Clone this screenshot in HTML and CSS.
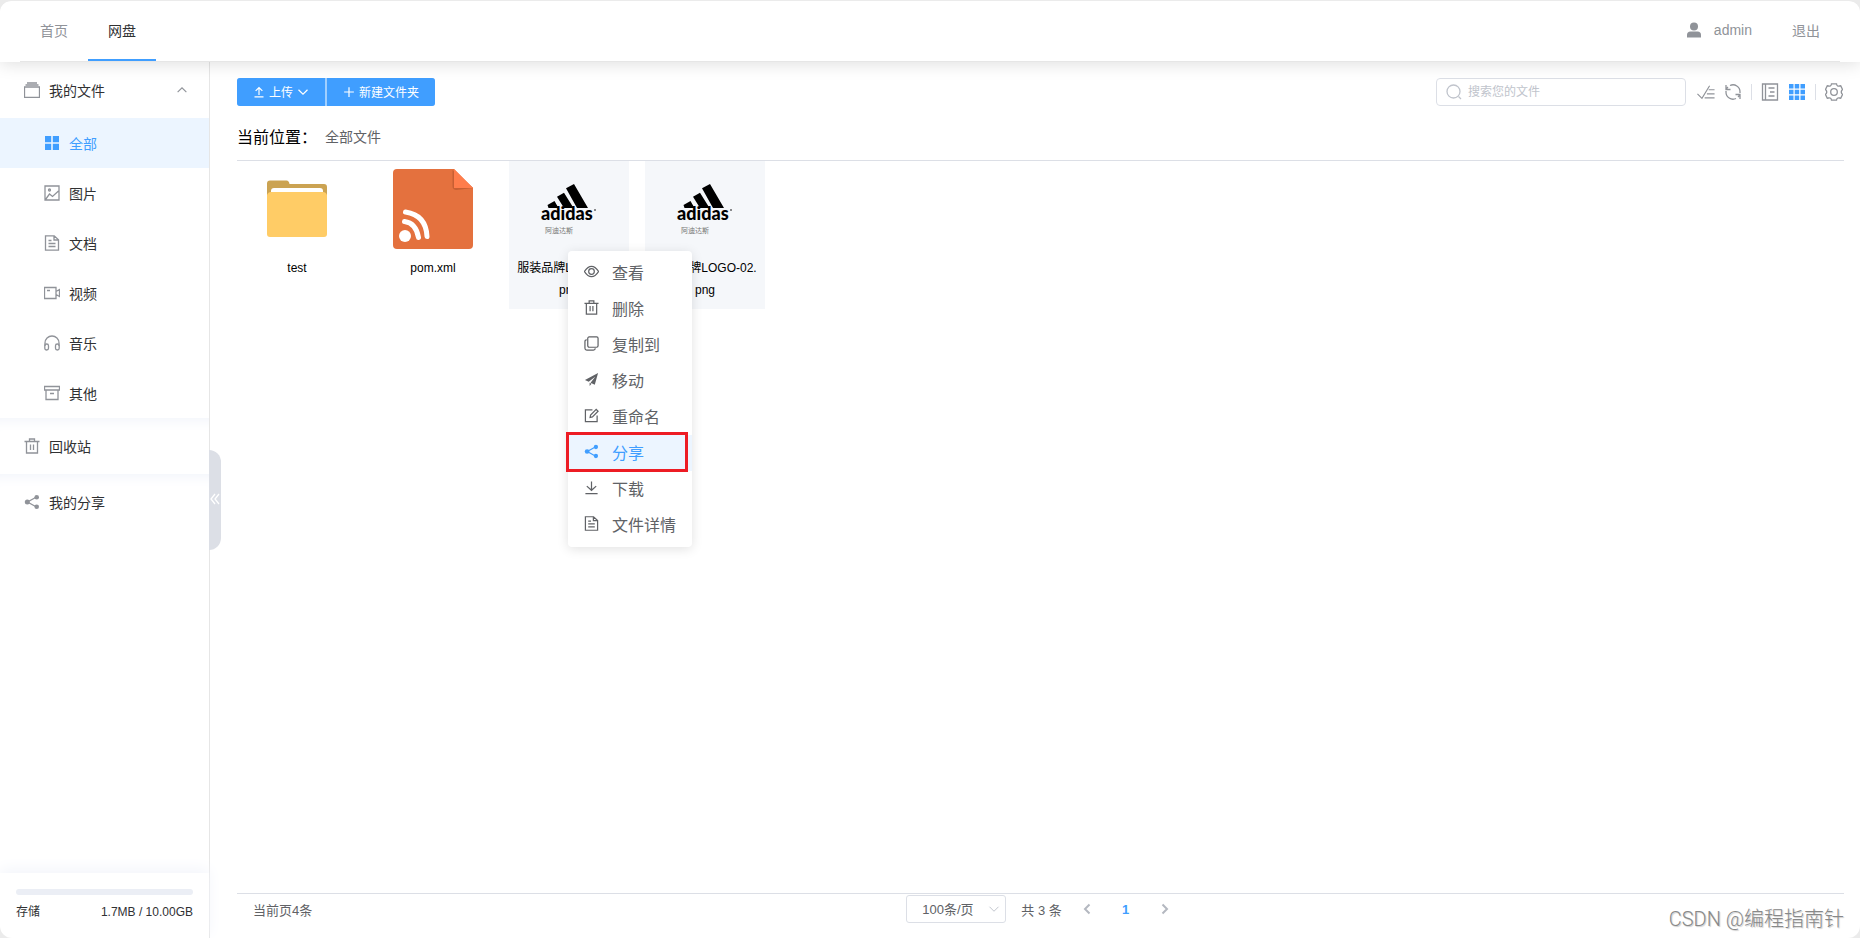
FILE: index.html
```
<!DOCTYPE html>
<html lang="zh-CN">
<head>
    <meta charset="UTF-8">
    <meta name="viewport" content="width=device-width, initial-scale=1.0">
    <title>网盘</title>
    <link rel="stylesheet" href="styles.css">
</head>
<body>
    <!-- 公用图标 -->
    <svg class="sprite" aria-hidden="true">
        <symbol id="i-trash" viewBox="0 0 16 16"><path d="M.5 3.500h15M5.500 3.500v-2.500h5v2.500M2.500 3.500v11.500h11V3.500M6.500 6.500v5.500M9.500 6.500v5.500"/></symbol>
        <symbol id="i-doc" viewBox="0 0 16 16"><path d="M1.500.8h8.700l4.300 4v10.400h-13zM10 1v4h4.500M4.500 5.500h3M4.500 8.500h7M4.500 11.500h7"/></symbol>
        <symbol id="i-share" viewBox="0 0 16 16"><path d="M12.500 3 3.500 8l9 5"/><g fill="currentColor" stroke="none"><circle cx="12.700" cy="3.200" r="2.300"/><circle cx="3.300" cy="8" r="2.500"/><circle cx="12.700" cy="12.800" r="2.300"/></g></symbol>
        <symbol id="i-down" viewBox="0 0 16 16"><path d="m2 5 6 6 6-6"/></symbol>
    </svg>

    <div class="app">
        <header class="header">
            <div class="header-inner">
                <nav class="nav">
                    <a href="#" class="nav-item">首页</a>
                    <a href="#" class="nav-item active">网盘</a>
                </nav>
                <div class="user">
                    <a href="#" class="nav-item user-name">
                        <svg class="icon" viewBox="0 0 16 16"><g fill="currentColor" stroke="none"><circle cx="8" cy="4.500" r="4"/><path d="M1 15.500v-2.500q0-3.500 3.500-3.500h7q3.500 0 3.500 3.500v2.500z"/></g></svg>
                        admin
                    </a>
                    <a href="#" class="nav-item">退出</a>
                </div>
            </div>
        </header>

        <div class="body">
            <aside class="sidebar">
                <nav class="menu">
                    <button class="menu-title">
                        <svg class="icon" viewBox="0 0 16 16"><path d="M.5 5h15v10.500h-15zM1.500 3h13M3 1h10"/></svg>
                        我的文件
                        <svg class="icon arrow" viewBox="0 0 16 16"><path d="m3 10.500 5-5 5 5"/></svg>
                    </button>
                    <a href="#" class="menu-item active">
                        <svg class="icon" viewBox="0 0 16 16"><path fill="currentColor" stroke="none" d="M1 1h6.200v6.200H1zM8.800 1H15v6.200H8.800zM1 8.800h6.200V15H1zM8.800 8.800H15V15H8.800z"/></svg>
                        全部
                    </a>
                    <a href="#" class="menu-item">
                        <svg class="icon" viewBox="0 0 16 16"><path d="M1 1h14v14H1zM1.500 14.500 5.500 9l3 2.500L14.500 6"/><circle cx="5.500" cy="5" r="1"/></svg>
                        图片
                    </a>
                    <a href="#" class="menu-item">
                        <svg class="icon"><use href="#i-doc"/></svg>
                        文档
                    </a>
                    <a href="#" class="menu-item">
                        <svg class="icon" viewBox="0 0 16 16"><path d="M.5 2.500h11.500v11H.5zM12 6.500l3.500-2v7l-3.500-2M3 5.500h3"/></svg>
                        视频
                    </a>
                    <a href="#" class="menu-item">
                        <svg class="icon" viewBox="0 0 16 16"><path d="M1 11V8a7 7 0 0 1 14 0v3"/><rect x=".8" y="9" width="3.700" height="6" rx="1.800"/><rect x="11.500" y="9" width="3.700" height="6" rx="1.800"/></svg>
                        音乐
                    </a>
                    <a href="#" class="menu-item">
                        <svg class="icon" viewBox="0 0 16 16"><path d="M.5 1.500h15v3.500H.5zM2 5v9.500h12V5M6 8.500h4"/></svg>
                        其他
                    </a>
                    <a href="#" class="menu-title shaded">
                        <svg class="icon"><use href="#i-trash"/></svg>
                        回收站
                    </a>
                    <a href="#" class="menu-title shaded">
                        <svg class="icon"><use href="#i-share"/></svg>
                        我的分享
                    </a>
                </nav>
                <div class="storage">
                    <div class="storage-bar"></div>
                    <div class="storage-text"><span>存储</span><span>1.7MB / 10.00GB</span></div>
                </div>
                <button class="collapse" aria-label="收起">
                    <svg viewBox="0 0 10 12"><path d="M5 1 1 6l4 5M9 1 5 6l4 5"/></svg>
                </button>
            </aside>

            <main class="main">
                <div class="toolbar">
                    <div class="btn-group">
                        <button class="btn">
                            <svg class="icon" viewBox="0 0 16 16"><path d="M2 14.500h12M8 12V2M3.500 6.500 8 2l4.500 4.500"/></svg>
                            上传
                            <svg class="icon"><use href="#i-down"/></svg>
                        </button>
                        <button class="btn">
                            <svg class="icon" viewBox="0 0 16 16"><path d="M8 1.500v13M1.500 8h13"/></svg>
                            新建文件夹
                        </button>
                    </div>
                    <div class="tools">
                        <label class="search">
                            <svg class="icon" viewBox="0 0 16 16"><circle cx="7.500" cy="7.500" r="6.500"/><path d="m12.500 12.500 2.500 2.500"/></svg>
                            <input type="text" placeholder="搜索您的文件" aria-label="搜索您的文件">
                        </label>
                        <button class="tool" aria-label="批量操作"><svg viewBox="0 0 20 18"><path d="m.5 11 5 5L14 2M13 6.500h6.500M11 11h8.500M8.500 15.500h11"/></svg></button>
                        <button class="tool" aria-label="刷新"><svg viewBox="0 0 18 18"><path d="M6 2.500A7 7 0 0 1 16 9v1M12 15.500A7 7 0 0 1 2 9V8M2 2v4.500h4.500M16 16v-4.500h-4.500M2.500 6A7 7 0 0 1 4 4M15.500 12a7 7 0 0 1-1.500 2"/></svg></button>
                        <span class="split"></span>
                        <button class="tool" aria-label="列表"><svg viewBox="0 0 18 18"><path d="M1.500 1h15v16h-15zM4.500 1v16M7.500 5h6M9 9h4.500M7.500 13h6"/></svg></button>
                        <button class="tool on" aria-label="网格"><svg viewBox="0 0 18 18"><path fill="currentColor" stroke="none" d="M1 1h4.500v4.500H1zM6.700 1h4.500v4.500H6.700zM12.500 1H17v4.500h-4.500zM1 6.700h4.500v4.500H1zM6.700 6.700h4.500v4.500H6.700zM12.500 6.700H17v4.500h-4.500zM1 12.500h4.500V17H1zM6.700 12.500h4.500V17H6.700zM12.500 12.500H17V17h-4.500z"/></svg></button>
                        <span class="split"></span>
                        <button class="tool" aria-label="设置"><svg viewBox="0 0 18 18"><circle cx="9" cy="9" r="3.300"/><path d="M6.500.8h5q.3 2.700 3 2.200l1.200-.2 1.800 3.700q-2.500 2.500 0 5l-1.800 3.700-1.200-.2q-2.700-.5-3 2.200h-5q-.3-2.700-3-2.200l-1.200.2L.5 11.500q2.500-2.500 0-5l1.800-3.700 1.200.2q2.700.5 3-2.200z"/></svg></button>
                    </div>
                </div>

                <div class="crumb">
                    <span class="crumb-label">当前位置：</span>
                    <a href="#">全部文件</a>
                </div>

                <div class="files">
                    <div class="file">
                        <svg class="thumb" viewBox="0 0 80 80">
                            <path fill="#cba352" d="M10 30V14.500q0-3 3-3h16.500q2.500 0 3 3.500H67q3 0 3 3v12z"/>
                            <path fill="#fff" d="M14 26v-4q0-3 3-3h46q3 0 3 3v4z"/>
                            <path fill="#ffcc66" d="M10 26q1-3 4-3h52q3 0 4 3v39q0 3-3 3H13q-3 0-3-3z"/>
                        </svg>
                        <div class="file-name">test</div>
                    </div>
                    <div class="file">
                        <svg class="thumb" viewBox="0 0 80 80">
                            <path fill="#e4713e" d="M4 0h57l19 19v57q0 4-4 4H4q-4 0-4-4V4q0-4 4-4z"/>
                            <path fill="#c75f33" d="M59.500 1v16q0 4 4 4L80 19z"/>
                            <path fill="#ff7d4b" d="m61 0 19 19H61z"/>
                            <circle cx="12" cy="67" r="6" fill="#fff"/>
                            <path fill="none" stroke="#fff" stroke-width="5" stroke-linecap="round" d="M11.500 52.500Q23 54 25.500 68.500M12.500 43Q33 46 34 67.500"/>
                        </svg>
                        <div class="file-name">pom.xml</div>
                    </div>
                    <div class="file selected">
                        <svg class="thumb" viewBox="0 0 80 80">
                            <path d="m37 19.300 8-4.300 14 24h-11zM28 27.700l7-4 9.500 15.300H35zM18.500 36l7-4 4 7h-10z"/>
                            <text class="logo-word" x="12" y="51">adidas</text>
                            <circle cx="66" cy="41" r=".8"/>
                            <text class="logo-sub" x="16" y="64">阿迪达斯</text>
                        </svg>
                        <div class="file-name">服装品牌LOGO-01.png</div>
                        <ul class="context-menu">
                            <li><button><svg class="icon" viewBox="0 0 16 16"><path d="M.5 8Q4 2.500 8 2.500T15.500 8Q12 13.500 8 13.500T.5 8z"/><circle cx="8" cy="8" r="3"/></svg>查看</button></li>
                            <li><button><svg class="icon"><use href="#i-trash"/></svg>删除</button></li>
                            <li><button><svg class="icon" viewBox="0 0 16 16"><rect x="4" y="1" width="11" height="11" rx="1.500"/><path d="M3 4q-2 0-2 2v7q0 2 2 2h7q2 0 2-2"/></svg>复制到</button></li>
                            <li><button><svg class="icon" viewBox="0 0 16 16"><path fill="currentColor" stroke="none" d="M15 1 1 8.500l4 2L12 5l-5 6.500 4.500 2zM6 11.500V15l2-2.500z"/></svg>移动</button></li>
                            <li><button><svg class="icon" viewBox="0 0 16 16"><path d="M9 2H1.500v12.500H14V8M6.500 10l.5-2.500 6-6 2 2-6 6z"/></svg>重命名</button></li>
                            <li class="current"><button><svg class="icon"><use href="#i-share"/></svg>分享</button></li>
                            <li><button><svg class="icon" viewBox="0 0 16 16"><path d="M1.500 14.500h13M8 1.500v9.500M3 6.500 8 11l5-4.500"/></svg>下载</button></li>
                            <li><button><svg class="icon"><use href="#i-doc"/></svg>文件详情</button></li>
                        </ul>
                    </div>
                    <div class="file selected">
                        <svg class="thumb" viewBox="0 0 80 80">
                            <path d="m37 19.300 8-4.300 14 24h-11zM28 27.700l7-4 9.500 15.300H35zM18.500 36l7-4 4 7h-10z"/>
                            <text class="logo-word" x="12" y="51">adidas</text>
                            <circle cx="66" cy="41" r=".8"/>
                            <text class="logo-sub" x="16" y="64">阿迪达斯</text>
                        </svg>
                        <div class="file-name">服装品牌LOGO-02.png</div>
                    </div>
                </div>

                <footer class="footer">
                    <span class="page-info">当前页4条</span>
                    <div class="pager">
                        <label class="size">
                            <select aria-label="每页条数"><option>100条/页</option></select>
                            <svg class="icon"><use href="#i-down"/></svg>
                        </label>
                        <span class="total">共 3 条</span>
                        <button aria-label="上一页"><svg class="icon" viewBox="0 0 16 16"><path d="M10.500 3.500 6 8l4.500 4.500"/></svg></button>
                        <button class="num">1</button>
                        <button aria-label="下一页"><svg class="icon" viewBox="0 0 16 16"><path d="M5.500 3.500 10 8l-4.500 4.500"/></svg></button>
                    </div>
                </footer>
            </main>
        </div>
        <div class="watermark">CSDN @编程指南针</div>
    </div>
</body>
</html>
```
FILE: styles.css
```
* {
    box-sizing: border-box;
}
body {
    margin: 0;
    background-color: #ebebeb;
    font-family: "Liberation Sans", "Noto Sans CJK SC", sans-serif;
    font-size: 14px;
    color: #303133;
}
a {
    color: inherit;
    text-decoration: none;
}
button, input, select {
    font-family: inherit;
    color: inherit;
    cursor: pointer;
}
button {
    padding: 0;
    border: none;
    background: none;
}
svg {
    fill: none;
    stroke: currentColor;
    stroke-width: 1.3;
}
.sprite {
    position: absolute;
    width: 0;
    height: 0;
}
.icon {
    width: 16px;
    height: 16px;
    flex: none;
}
.app {
    position: relative;
    display: flex;
    flex-direction: column;
    min-height: 100vh;
    border-top: 1px solid #ebebeb;
    border-radius: 12px;
    background-color: #fff;
    background-clip: padding-box;
    overflow: hidden;
}

/* 顶部导航 */
.header {
    position: relative;
    z-index: 5;
    padding: 0 20px;
    background-color: #fff;
    box-shadow: 0 2px 16px rgba(0, 0, 0, 0.13);
}
.header-inner {
    display: flex;
    justify-content: space-between;
    height: 61px;
    border-bottom: 1px solid #e6e6e6;
}
.nav, .user {
    display: flex;
}
.nav-item {
    display: flex;
    align-items: center;
    padding: 0 20px;
    border-bottom: 2px solid transparent;
    color: #909399;
}
.nav-item.active {
    border-bottom-color: #409eff;
    color: #303133;
}
.user-name {
    gap: 12px;
}

.body {
    display: flex;
    flex: 1;
}

/* 左侧菜单 */
.sidebar {
    position: relative;
    display: flex;
    flex-direction: column;
    justify-content: space-between;
    width: 210px;
    flex: none;
    border-right: 1px solid #e6e6e6;
}
.menu-title, .menu-item {
    display: flex;
    align-items: center;
    gap: 9px;
    width: 100%;
    height: 50px;
    padding: 0 20px 0 44px;
    font-size: 14px;
}
.menu-title {
    height: 56px;
    padding-left: 24px;
}
.menu .icon {
    color: #909399;
}
.menu .arrow {
    width: 14px;
    height: 14px;
    margin-left: auto;
}
.menu-item.active, .menu-item.active .icon {
    background-color: #ecf5ff;
    color: #409eff;
}
.shaded {
    box-shadow: inset 0 14px 14px -12px #f0f3fa;
}
.storage {
    padding: 16px 16px 17px;
    box-shadow: 0 -4px 14px #f3f5fb;
    font-size: 12px;
}
.storage-bar {
    height: 6px;
    border-radius: 3px;
    background-color: #ebeef5;
}
.storage-text {
    display: flex;
    justify-content: space-between;
    margin-top: 8px;
    line-height: 18px;
}
.collapse {
    position: absolute;
    top: 50%;
    left: 100%;
    width: 12px;
    height: 100px;
    transform: translateY(-50%);
    border-radius: 0 12px 12px 0;
    background-color: #dcdfe6;
    color: #fff;
}
.collapse svg {
    width: 10px;
    height: 12px;
}

/* 右侧内容 */
.main {
    display: flex;
    flex-direction: column;
    flex: 1;
    min-width: 0;
    padding: 16px 16px 12px 27px;
}
.toolbar, .btn-group, .tools {
    display: flex;
    align-items: center;
}
.toolbar {
    justify-content: space-between;
}
.btn-group {
    gap: 2px;
    border-radius: 3px;
    background-color: #a0cfff;
    overflow: hidden;
}
.btn {
    display: flex;
    align-items: center;
    gap: 4px;
    height: 28px;
    padding: 0 16px 1px;
    background-color: #409eff;
    color: #fff;
    font-size: 12px;
}
.btn .icon {
    width: 12px;
    height: 12px;
    stroke-width: 1.6;
}
.tools {
    gap: 9px;
    padding-right: 1px;
    color: #909399;
}
.search {
    display: flex;
    align-items: center;
    gap: 6px;
    width: 250px;
    height: 28px;
    margin-right: 2px;
    padding: 0 9px;
    border: 1px solid #dcdfe6;
    border-radius: 4px;
    color: #c0c4cc;
}
.search input {
    flex: 1;
    min-width: 0;
    padding: 0;
    border: none;
    outline: none;
    font-size: 12px;
}
.search input::placeholder {
    color: #c0c4cc;
}
.tool, .tool svg {
    display: block;
    width: 18px;
    height: 18px;
}
.tool.on {
    color: #409eff;
}
.split {
    width: 1px;
    height: 16px;
    background-color: #dcdfe6;
}
.crumb {
    display: flex;
    align-items: center;
    gap: 8px;
    height: 54px;
    padding-top: 6px;
    color: #606266;
}
.crumb-label {
    color: #000;
    font-size: 16px;
}
.files {
    display: flex;
    flex-wrap: wrap;
    align-content: flex-start;
    align-items: flex-start;
    gap: 16px;
    flex: 1;
    border-top: 1px solid #dcdfe6;
}
.file {
    position: relative;
    width: 120px;
    min-height: 148px;
    padding: 8px;
    color: #000;
    font-size: 12px;
    line-height: 22px;
    text-align: center;
}
.file.selected {
    background-color: #f5f7fa;
}
.thumb {
    display: block;
    width: 80px;
    height: 80px;
    margin: 0 auto 8px;
    stroke: none;
}
.selected .thumb {
    fill: #000;
    text-anchor: start;
}
.logo-word {
    font-family: Lato, sans-serif;
    font-size: 18px;
    font-weight: 900;
}
.logo-sub {
    font-size: 7px;
    fill: #777;
}
.file-name {
    word-break: break-all;
}

/* 右键菜单 */
.context-menu {
    position: absolute;
    z-index: 10;
    top: 90px;
    left: 59px;
    width: 124px;
    margin: 0;
    padding: 4px 0;
    border-radius: 4px;
    background-color: #fff;
    box-shadow: 0 2px 12px rgba(0, 0, 0, 0.12);
    list-style: none;
}
.context-menu button {
    display: flex;
    align-items: center;
    gap: 13px;
    width: 100%;
    height: 36px;
    padding: 0 16px 3px;
    color: #606266;
    font-size: 16px;
    white-space: nowrap;
}
.context-menu .icon {
    width: 15px;
    height: 15px;
}
.context-menu .current {
    position: relative;
    background-color: #ecf5ff;
}
.context-menu .current button {
    color: #409eff;
}
.context-menu .current::after {
    content: "";
    position: absolute;
    inset: -3px 4px -1px -2px;
    border: 3px solid #ed1c24;
    pointer-events: none;
}

/* 分页 */
.footer {
    display: grid;
    grid-template-columns: 1fr auto 1fr;
    align-items: center;
    height: 33px;
    padding: 0 16px 2px;
    border-top: 1px solid #dcdfe6;
    color: #606266;
    font-size: 13px;
}
.pager {
    display: flex;
    align-items: center;
    gap: 11px;
    padding-left: 4px;
}
.size {
    position: relative;
    width: 100px;
    height: 28px;
}
.size select {
    width: 100%;
    height: 28px;
    padding: 0 15px;
    border: 1px solid #dcdfe6;
    border-radius: 3px;
    background-color: #fff;
    font-size: 13px;
    appearance: none;
}
.size .icon {
    position: absolute;
    top: 8px;
    right: 6px;
    width: 12px;
    height: 12px;
    color: #c0c4cc;
    pointer-events: none;
}
.total {
    margin-left: 4px;
}
.pager button {
    display: flex;
    align-items: center;
    justify-content: center;
    width: 28px;
    height: 28px;
    color: #b4b8c0;
    font-size: 13px;
}
.pager button .icon {
    stroke-width: 2;
}
.pager .num {
    color: #409eff;
    font-weight: 700;
}
.watermark {
    position: absolute;
    right: 16px;
    bottom: 6px;
    font-family: Roboto, "Noto Sans CJK SC", sans-serif;
    font-size: 20px;
    font-weight: 300;
    line-height: 26px;
    color: #888;
    text-shadow: 1px 1px 1px #ccc;
}
```
